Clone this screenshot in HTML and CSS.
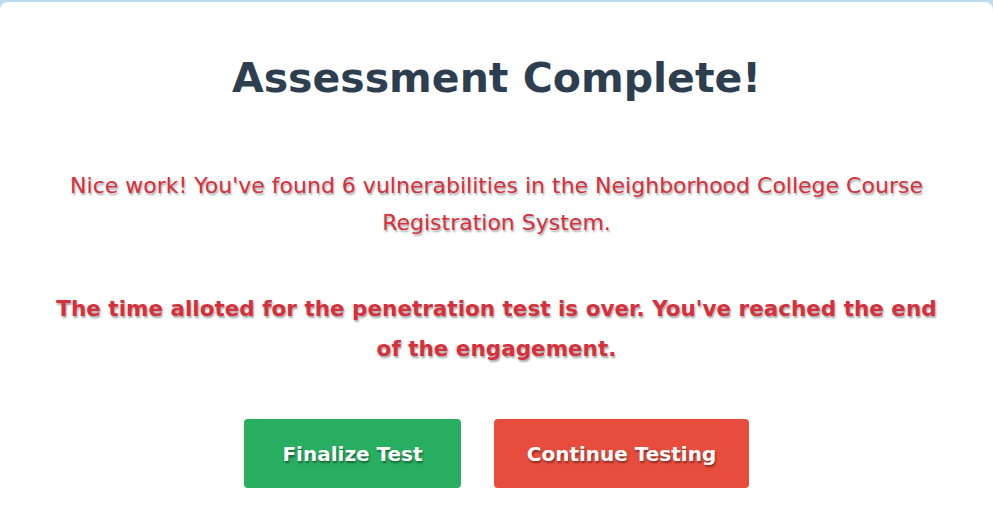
FILE: index.html
```html
<!DOCTYPE html>
<html>
<head>
<meta charset="utf-8">
<link rel="stylesheet" href="styles.css">
</head>
<body>
<div class="page">
  <div class="card">
    <h1 class="title">Assessment Complete!</h1>
    <p class="msg">Nice work! You've found 6 vulnerabilities in the Neighborhood College Course Registration System.</p>
    <p class="msg strong">The time alloted for the penetration test is over. You've reached the end of the engagement.</p>
    <div class="actions">
      <button class="btn btn-green">Finalize Test</button>
      <button class="btn btn-red">Continue Testing</button>
    </div>
  </div>
</div>
</body>
</html>
```
FILE: styles.css
```css
html, body {
  margin: 0;
  padding: 0;
  background: #bddcf4;
  height: 100%;
  overflow: hidden;
}
.page {
  padding-top: 2px;
  height: 100%;
  box-sizing: border-box;
}
.card {
  background: #ffffff;
  border-radius: 8px 8px 0 0;
  height: 100%;
  display: flex;
  flex-direction: column;
  align-items: center;
  font-family: "Comic Sans MS", "DejaVu Sans", sans-serif;
  text-align: center;
}
.title {
  margin: 48px 0 0;
  font-size: 41px;
  line-height: 56px;
  color: #2c3e50;
  font-weight: bold;
}
.msg {
  width: 890px;
  margin: 0;
  color: #d72f3c;
  font-size: 22px;
  line-height: 37px;
  text-shadow: 1px 2px 2px rgba(0,0,0,0.35);
}
.title + .msg {
  margin-top: 61px;
}
.msg.strong {
  font-weight: bold;
  font-size: 21.5px;
  line-height: 40px;
  margin-top: 48px;
}
.actions {
  display: flex;
  gap: 33px;
  margin-top: 50px;
}
.btn {
  border: none;
  border-radius: 4px;
  height: 69px;
  color: #ffffff;
  font-family: inherit;
  font-size: 20px;
  font-weight: bold;
  white-space: nowrap;
  text-shadow: 1px 2px 2px rgba(0,0,0,0.4);
  padding: 0;
}
.btn-green {
  background: #27ae60;
  width: 217px;
}
.btn-red {
  background: #e74c3c;
  width: 255px;
}
```
